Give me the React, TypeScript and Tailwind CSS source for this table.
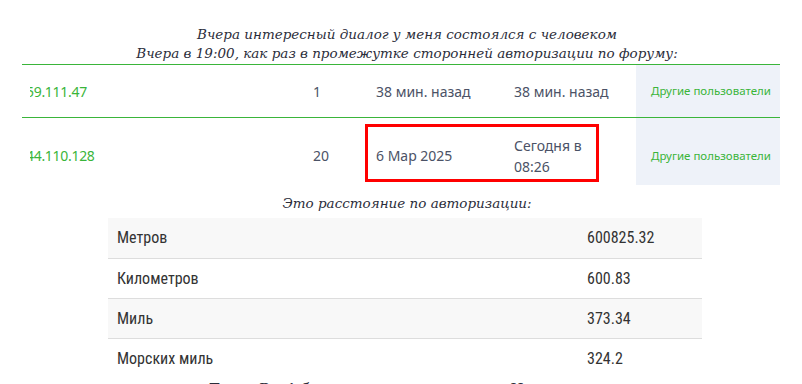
import React from "react";

const serif = { fontFamily: '"DejaVu Serif", "Liberation Serif", serif' };
const sans = { fontFamily: '"Noto Sans", "Open Sans", sans-serif' };
const cond = { fontFamily: '"Roboto Condensed", "Liberation Sans Narrow", Roboto, sans-serif' };

export default function App() {
  return (
    <div className="w-[802px] h-[384px] overflow-hidden bg-white relative">
      <div className="pt-[25px] pl-[12px] text-center italic text-[13.5px] leading-[19px] text-[#2b2d3a]" style={serif}>
        <div>Вчера интересный диалог у меня состоялся с человеком</div>
        <div>Вчера в 19:00, как раз в промежутке сторонней авторизации по форуму:</div>
      </div>

      <div className="ml-[22px] w-[758px] mt-[1px] border-t border-[#3ab53a] text-[14px] text-[#4b5266]" style={sans}>
        <div className="grid grid-cols-[8px_283px_63px_138px_122px_144px] h-[53px] border-b border-[#3ab53a] items-stretch">
          <div />
          <div className="overflow-hidden flex items-center">
            <span className="text-[#3ab53a] -ml-[4px] tracking-[-0.3px]">59.111.47</span>
          </div>
          <div className="flex items-center">1</div>
          <div className="flex items-center">38 мин. назад</div>
          <div className="flex items-center">38 мин. назад</div>
          <div className="bg-[#eef2f9] flex items-center pl-[15px] text-[11.5px] text-[#3ab53a]">Другие пользователи</div>
        </div>
        <div className="grid grid-cols-[8px_283px_63px_138px_122px_144px] h-[67px] items-stretch">
          <div />
          <div className="overflow-hidden flex items-center pt-[8px]">
            <span className="text-[#3ab53a] -ml-[4px] tracking-[-0.3px]">44.110.128</span>
          </div>
          <div className="flex items-center pt-[8px]">20</div>
          <div className="flex items-center pt-[8px]">6 Мар 2025</div>
          <div className="flex items-center pt-[8px]">
            <span className="w-[80px] leading-[21px]">Сегодня в 08:26</span>
          </div>
          <div className="bg-[#eef2f9] flex items-center pt-[8px] pl-[15px] text-[11.5px] text-[#3ab53a]">Другие пользователи</div>
        </div>
      </div>

      <div className="absolute left-[365px] top-[124px] w-[234px] h-[58px] border-[3px] border-[#ff0000]" />

      <div className="pl-[12px] text-center italic text-[13.5px] leading-[19px] text-[#2b2d3a] mt-[9px]" style={serif}>
        Это расстояние по авторизации:
      </div>

      <div className="ml-[108px] w-[594px] mt-[5px] text-[16px] text-[#333]" style={cond}>
        {[
          ["Метров", "600825.32", true],
          ["Километров", "600.83", false],
          ["Миль", "373.34", true],
          ["Морских миль", "324.2", false],
        ].map(([k, v, g], i) => (
          <div
            key={i}
            className={`grid grid-cols-[479px_1fr] h-[40px] items-center ${g ? "bg-[#f8f8f8]" : "bg-white"} ${i > 0 ? "border-t border-[#dddddd]" : ""}`}
          >
            <div className="pl-[9px]">{k}</div>
            <div>{v}</div>
          </div>
        ))}
      </div>

      <div className="text-center text-[15px] leading-[19px] text-[#2b2d3a] mt-[2px] ml-[-60px]" style={serif}>
        Тогда Вы 1 бывали в своем аккаунте. Но
      </div>
    </div>
  );
}
